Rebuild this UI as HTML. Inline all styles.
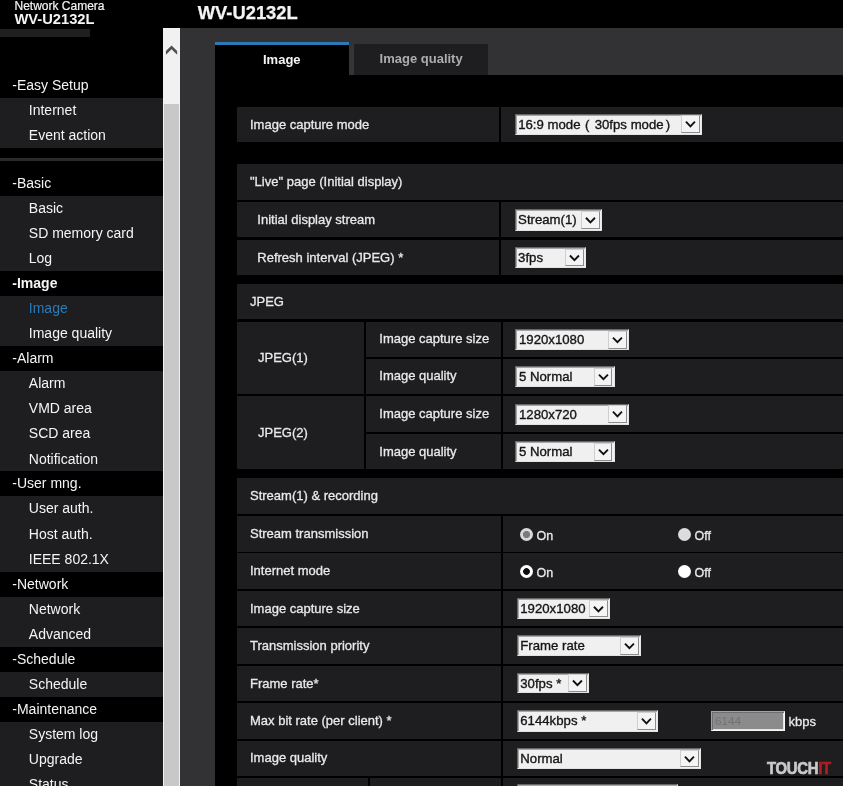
<!DOCTYPE html>
<html><head><meta charset="utf-8"><title>WV-U2132L</title>
<style>
html,body{margin:0;padding:0;background:#000;}
body{width:843px;height:786px;overflow:hidden;position:relative;font-family:"Liberation Sans",sans-serif;color:#f2f2f2;}
#wrap{position:absolute;left:0;top:0;width:843px;height:786px;overflow:hidden;will-change:transform;}
.b{position:absolute;}
.t{position:absolute;white-space:nowrap;color:#f4f4f4;font-size:14px;}
.sb{font-size:14px;}
.lb{font-size:13px;color:#e9e9e9;-webkit-text-stroke:0.3px #e9e9e9;margin-top:-0.2px;}
.sel{position:absolute;box-sizing:border-box;background:#f0f0f0;border:1.3px solid;border-color:#666 #e6e6e6 #e2e2e2 #666;box-shadow:inset 1px 1px 0 #a6a6a6;color:#151515;font-size:13.2px;white-space:nowrap;overflow:hidden;-webkit-text-stroke:0.35px #151515;}
.sel .st{position:absolute;left:2.6px;top:0;}
.sel .ar{position:absolute;right:1.1px;top:0.9px;box-sizing:border-box;background:#f4f4f4;border:1px solid;border-color:#cfcfcf #8c8c8c #8c8c8c #cfcfcf;display:block;line-height:0;}
.fw{display:inline-block;width:13.6px;}
.inp{position:absolute;box-sizing:border-box;background:#8b8b8b;border:1.1px solid;border-color:#a2a2a2 #f8f8f8 #f8f8f8 #a2a2a2;box-shadow:inset 1px 1px 0 #6e6e6e, inset -1px -1px 0 #e4e4e4;color:#727272;font-size:11.7px;padding-left:2.9px;}
.wm{font-weight:bold;font-size:16.5px;color:#c9c9c9;transform-origin:0 50%;transform:scaleX(0.90);letter-spacing:-0.3px;-webkit-text-stroke:0.7px;}
</style></head>
<body>
<div id="wrap">
<div class="b" style="left:0.0px;top:97.7px;width:163.0px;height:50.1px;background:#1e1e20;"></div>
<div class="b" style="left:0.0px;top:195.6px;width:163.0px;height:75.4px;background:#1e1e20;"></div>
<div class="b" style="left:0.0px;top:295.6px;width:163.0px;height:50.7px;background:#1e1e20;"></div>
<div class="b" style="left:0.0px;top:371.3px;width:163.0px;height:100.0px;background:#1e1e20;"></div>
<div class="b" style="left:0.0px;top:496.3px;width:163.0px;height:75.5px;background:#1e1e20;"></div>
<div class="b" style="left:0.0px;top:596.8px;width:163.0px;height:50.1px;background:#1e1e20;"></div>
<div class="b" style="left:0.0px;top:671.9px;width:163.0px;height:25.3px;background:#1e1e20;"></div>
<div class="b" style="left:0.0px;top:722.0px;width:163.0px;height:64.0px;background:#1e1e20;"></div>
<div class="b" style="left:0.0px;top:29.0px;width:90.0px;height:7.5px;background:#1f1f21;"></div>
<div class="b" style="left:0.0px;top:157.8px;width:163.0px;height:3.0px;background:#2a2a2c;"></div>
<div class="t sb" style="left:12.3px;top:73.2px;height:25.0px;line-height:25.0px;">-Easy Setup</div>
<div class="t sb" style="left:28.8px;top:97.7px;height:25.0px;line-height:25.0px;">Internet</div>
<div class="t sb" style="left:28.8px;top:122.8px;height:25.0px;line-height:25.0px;">Event action</div>
<div class="t sb" style="left:12.3px;top:170.5px;height:25.0px;line-height:25.0px;">-Basic</div>
<div class="t sb" style="left:28.8px;top:195.7px;height:25.0px;line-height:25.0px;">Basic</div>
<div class="t sb" style="left:28.8px;top:220.7px;height:25.0px;line-height:25.0px;">SD memory card</div>
<div class="t sb" style="left:28.8px;top:245.8px;height:25.0px;line-height:25.0px;">Log</div>
<div class="t sb" style="left:12.3px;top:270.8px;height:25.0px;line-height:25.0px;font-weight:bold;">-Image</div>
<div class="t sb" style="left:28.8px;top:295.9px;height:25.0px;line-height:25.0px;color:#2a7ab8;">Image</div>
<div class="t sb" style="left:28.8px;top:321.0px;height:25.0px;line-height:25.0px;">Image quality</div>
<div class="t sb" style="left:12.3px;top:346.2px;height:25.0px;line-height:25.0px;">-Alarm</div>
<div class="t sb" style="left:28.8px;top:371.2px;height:25.0px;line-height:25.0px;">Alarm</div>
<div class="t sb" style="left:28.8px;top:396.3px;height:25.0px;line-height:25.0px;">VMD area</div>
<div class="t sb" style="left:28.8px;top:421.4px;height:25.0px;line-height:25.0px;">SCD area</div>
<div class="t sb" style="left:28.8px;top:446.5px;height:25.0px;line-height:25.0px;">Notification</div>
<div class="t sb" style="left:12.3px;top:471.3px;height:25.0px;line-height:25.0px;">-User mng.</div>
<div class="t sb" style="left:28.8px;top:496.4px;height:25.0px;line-height:25.0px;">User auth.</div>
<div class="t sb" style="left:28.8px;top:521.5px;height:25.0px;line-height:25.0px;">Host auth.</div>
<div class="t sb" style="left:28.8px;top:546.6px;height:25.0px;line-height:25.0px;">IEEE 802.1X</div>
<div class="t sb" style="left:12.3px;top:571.8px;height:25.0px;line-height:25.0px;">-Network</div>
<div class="t sb" style="left:28.8px;top:596.8px;height:25.0px;line-height:25.0px;">Network</div>
<div class="t sb" style="left:28.8px;top:621.9px;height:25.0px;line-height:25.0px;">Advanced</div>
<div class="t sb" style="left:12.3px;top:646.9px;height:25.0px;line-height:25.0px;">-Schedule</div>
<div class="t sb" style="left:28.8px;top:672.0px;height:25.0px;line-height:25.0px;">Schedule</div>
<div class="t sb" style="left:12.3px;top:697.0px;height:25.0px;line-height:25.0px;">-Maintenance</div>
<div class="t sb" style="left:28.8px;top:722.1px;height:25.0px;line-height:25.0px;">System log</div>
<div class="t sb" style="left:28.8px;top:747.2px;height:25.0px;line-height:25.0px;">Upgrade</div>
<div class="t sb" style="left:28.8px;top:772.3px;height:25.0px;line-height:25.0px;">Status</div>
<div class="t " style="left:14.5px;top:-3.3px;height:18.0px;line-height:18.0px;font-size:12px;-webkit-text-stroke:0.2px #f4f4f4;">Network Camera</div>
<div class="t " style="left:14.5px;top:10.0px;height:18.0px;line-height:18.0px;font-size:14.7px;font-weight:bold;">WV-U2132L</div>
<div class="b" style="left:163.0px;top:28.3px;width:17.2px;height:760.0px;background:#f1f1f1;"></div>
<div class="b" style="left:164.3px;top:103.7px;width:14.5px;height:700.0px;background:#c8c8c8;"></div>
<svg class="b" style="left:165px;top:44px;width:13px;height:12px" viewBox="0 0 13 12"><polygon points="6.55,1.5 12.15,6.9 12.15,10.7 6.55,5.3 0.95,10.7 0.95,6.9" fill="#505050"/></svg>
<div class="b" style="left:180.2px;top:28.4px;width:663.0px;height:760.0px;background:#323234;"></div>
<div class="b" style="left:215.1px;top:75.0px;width:628.0px;height:711.0px;background:#000;"></div>
<div class="b" style="left:215.1px;top:43.5px;width:134.0px;height:32.0px;background:#000;"></div>
<div class="b" style="left:215.1px;top:41.5px;width:134.0px;height:3.2px;background:#2a7ab8;"></div>
<div class="b" style="left:349.0px;top:44.5px;width:5.0px;height:30.5px;background:#353537;"></div>
<div class="b" style="left:353.5px;top:43.8px;width:134.5px;height:31.2px;background:#1e1e20;"></div>
<div class="t " style="left:263.0px;top:43.4px;height:33.0px;line-height:33.0px;font-weight:bold;font-size:13px;">Image</div>
<div class="t " style="left:379.6px;top:42.4px;height:33.0px;line-height:33.0px;font-weight:bold;font-size:13px;color:#adadad;">Image quality</div>
<div class="t " style="left:197.8px;top:0.0px;height:26.0px;line-height:26.0px;font-weight:bold;font-size:18.35px;-webkit-text-stroke:0.25px #f4f4f4;">WV-U2132L</div>
<div class="b" style="left:237.0px;top:106.8px;width:262.2px;height:35.5px;background:#1e1e20;"></div>
<div class="b" style="left:501.4px;top:106.8px;width:341.6px;height:35.5px;background:#1e1e20;"></div>
<div class="t lb" style="left:250.0px;top:106.8px;height:35.5px;line-height:35.5px;">Image capture mode</div>
<div class="sel" style="left:514.6px;top:113.5px;width:187.4px;height:21.3px;line-height:19.7px"><span class="st">16:9 mode<span class="fw" style="padding-left:4.6px;width:9.6px">(</span>30fps mode<span class="fw" style="padding-left:2.2px;width:8px">)</span></span><span class="ar" style="width:18.7px;height:17.7px"><svg style="position:absolute;left:-1px;top:-1px" width="18.7" height="17.7" viewBox="0 0 18.7 17.7"><path d="M4.95 6.70 L9.45 11.30 L13.95 6.70" fill="none" stroke="#111" stroke-width="1.9"/></svg></span></div>
<div class="b" style="left:237.0px;top:164.3px;width:606.0px;height:35.4px;background:#1e1e20;"></div>
<div class="t lb" style="left:250.0px;top:164.3px;height:35.4px;line-height:35.4px;">&quot;Live&quot; page (Initial display)</div>
<div class="b" style="left:237.0px;top:201.9px;width:262.2px;height:35.5px;background:#1e1e20;"></div>
<div class="b" style="left:501.4px;top:201.9px;width:341.6px;height:35.5px;background:#1e1e20;"></div>
<div class="t lb" style="left:257.3px;top:201.9px;height:35.5px;line-height:35.5px;">Initial display stream</div>
<div class="sel" style="left:514.5px;top:209.4px;width:87.6px;height:21.4px;line-height:19.8px"><span class="st">Stream(1)</span><span class="ar" style="width:18.7px;height:17.8px"><svg style="position:absolute;left:-1px;top:-1px" width="18.7" height="17.8" viewBox="0 0 18.7 17.8"><path d="M4.95 6.75 L9.45 11.35 L13.95 6.75" fill="none" stroke="#111" stroke-width="1.9"/></svg></span></div>
<div class="b" style="left:237.0px;top:239.7px;width:262.2px;height:35.5px;background:#1e1e20;"></div>
<div class="b" style="left:501.4px;top:239.7px;width:341.6px;height:35.5px;background:#1e1e20;"></div>
<div class="t lb" style="left:257.3px;top:239.7px;height:35.5px;line-height:35.5px;">Refresh interval (JPEG) *</div>
<div class="sel" style="left:514.5px;top:247.2px;width:71.6px;height:20.9px;line-height:19.3px"><span class="st">3fps</span><span class="ar" style="width:18.7px;height:17.3px"><svg style="position:absolute;left:-1px;top:-1px" width="18.7" height="17.3" viewBox="0 0 18.7 17.3"><path d="M4.95 6.50 L9.45 11.10 L13.95 6.50" fill="none" stroke="#111" stroke-width="1.9"/></svg></span></div>
<div class="b" style="left:237.0px;top:284.0px;width:606.0px;height:35.4px;background:#1e1e20;"></div>
<div class="t lb" style="left:250.0px;top:284.0px;height:35.4px;line-height:35.4px;">JPEG</div>
<div class="b" style="left:237.0px;top:321.6px;width:127.2px;height:72.6px;background:#1e1e20;"></div>
<div class="b" style="left:237.0px;top:396.0px;width:127.2px;height:72.9px;background:#1e1e20;"></div>
<div class="t lb" style="left:258.0px;top:321.7px;height:72.3px;line-height:72.3px;">JPEG(1)</div>
<div class="t lb" style="left:258.0px;top:397.2px;height:72.3px;line-height:72.3px;">JPEG(2)</div>
<div class="b" style="left:366.3px;top:321.6px;width:134.3px;height:35.5px;background:#1e1e20;"></div>
<div class="b" style="left:503.0px;top:321.6px;width:340.0px;height:35.5px;background:#1e1e20;"></div>
<div class="t lb" style="left:379.3px;top:321.6px;height:35.5px;line-height:35.5px;">Image capture size</div>
<div class="b" style="left:366.3px;top:358.6px;width:134.3px;height:35.5px;background:#1e1e20;"></div>
<div class="b" style="left:503.0px;top:358.6px;width:340.0px;height:35.5px;background:#1e1e20;"></div>
<div class="t lb" style="left:379.3px;top:358.6px;height:35.5px;line-height:35.5px;">Image quality</div>
<div class="b" style="left:366.3px;top:396.0px;width:134.3px;height:35.5px;background:#1e1e20;"></div>
<div class="b" style="left:503.0px;top:396.0px;width:340.0px;height:35.5px;background:#1e1e20;"></div>
<div class="t lb" style="left:379.3px;top:396.0px;height:35.5px;line-height:35.5px;">Image capture size</div>
<div class="b" style="left:366.3px;top:433.9px;width:134.3px;height:35.5px;background:#1e1e20;"></div>
<div class="b" style="left:503.0px;top:433.9px;width:340.0px;height:35.5px;background:#1e1e20;"></div>
<div class="t lb" style="left:379.3px;top:433.9px;height:35.5px;line-height:35.5px;">Image quality</div>
<div class="sel" style="left:515.4px;top:329.3px;width:113.3px;height:21.2px;line-height:19.6px"><span class="st">1920x1080</span><span class="ar" style="width:18.7px;height:17.6px"><svg style="position:absolute;left:-1px;top:-1px" width="18.7" height="17.6" viewBox="0 0 18.7 17.6"><path d="M4.95 6.65 L9.45 11.25 L13.95 6.65" fill="none" stroke="#111" stroke-width="1.9"/></svg></span></div>
<div class="sel" style="left:515.4px;top:366.3px;width:99.2px;height:21.0px;line-height:19.4px"><span class="st">5 Normal</span><span class="ar" style="width:18.7px;height:17.4px"><svg style="position:absolute;left:-1px;top:-1px" width="18.7" height="17.4" viewBox="0 0 18.7 17.4"><path d="M4.95 6.55 L9.45 11.15 L13.95 6.55" fill="none" stroke="#111" stroke-width="1.9"/></svg></span></div>
<div class="sel" style="left:515.4px;top:403.5px;width:113.3px;height:21.3px;line-height:19.7px"><span class="st">1280x720</span><span class="ar" style="width:18.7px;height:17.7px"><svg style="position:absolute;left:-1px;top:-1px" width="18.7" height="17.7" viewBox="0 0 18.7 17.7"><path d="M4.95 6.70 L9.45 11.30 L13.95 6.70" fill="none" stroke="#111" stroke-width="1.9"/></svg></span></div>
<div class="sel" style="left:515.4px;top:441.4px;width:99.2px;height:21.0px;line-height:19.4px"><span class="st">5 Normal</span><span class="ar" style="width:18.7px;height:17.4px"><svg style="position:absolute;left:-1px;top:-1px" width="18.7" height="17.4" viewBox="0 0 18.7 17.4"><path d="M4.95 6.55 L9.45 11.15 L13.95 6.55" fill="none" stroke="#111" stroke-width="1.9"/></svg></span></div>
<div class="b" style="left:237.0px;top:478.4px;width:606.0px;height:35.4px;background:#1e1e20;"></div>
<div class="t lb" style="left:250.0px;top:478.4px;height:35.4px;line-height:35.4px;">Stream(1) &amp; recording</div>
<div class="b" style="left:237.0px;top:516.0px;width:263.6px;height:35.5px;background:#1e1e20;"></div>
<div class="b" style="left:503.0px;top:516.0px;width:340.0px;height:35.5px;background:#1e1e20;"></div>
<div class="t lb" style="left:250.0px;top:516.0px;height:35.5px;line-height:35.5px;">Stream transmission</div>
<div class="b" style="left:237.0px;top:553.4px;width:263.6px;height:35.5px;background:#1e1e20;"></div>
<div class="b" style="left:503.0px;top:553.4px;width:340.0px;height:35.5px;background:#1e1e20;"></div>
<div class="t lb" style="left:250.0px;top:553.4px;height:35.5px;line-height:35.5px;">Internet mode</div>
<div class="b" style="left:237.0px;top:590.8px;width:263.6px;height:35.5px;background:#1e1e20;"></div>
<div class="b" style="left:503.0px;top:590.8px;width:340.0px;height:35.5px;background:#1e1e20;"></div>
<div class="t lb" style="left:250.0px;top:590.8px;height:35.5px;line-height:35.5px;">Image capture size</div>
<div class="b" style="left:237.0px;top:628.3px;width:263.6px;height:35.5px;background:#1e1e20;"></div>
<div class="b" style="left:503.0px;top:628.3px;width:340.0px;height:35.5px;background:#1e1e20;"></div>
<div class="t lb" style="left:250.0px;top:628.3px;height:35.5px;line-height:35.5px;">Transmission priority</div>
<div class="b" style="left:237.0px;top:665.7px;width:263.6px;height:35.5px;background:#1e1e20;"></div>
<div class="b" style="left:503.0px;top:665.7px;width:340.0px;height:35.5px;background:#1e1e20;"></div>
<div class="t lb" style="left:250.0px;top:665.7px;height:35.5px;line-height:35.5px;">Frame rate*</div>
<div class="b" style="left:237.0px;top:703.1px;width:263.6px;height:35.5px;background:#1e1e20;"></div>
<div class="b" style="left:503.0px;top:703.1px;width:340.0px;height:35.5px;background:#1e1e20;"></div>
<div class="t lb" style="left:250.0px;top:703.1px;height:35.5px;line-height:35.5px;">Max bit rate (per client) *</div>
<div class="b" style="left:237.0px;top:740.5px;width:263.6px;height:35.5px;background:#1e1e20;"></div>
<div class="b" style="left:503.0px;top:740.5px;width:340.0px;height:35.5px;background:#1e1e20;"></div>
<div class="t lb" style="left:250.0px;top:740.5px;height:35.5px;line-height:35.5px;">Image quality</div>
<div class="b" style="left:237.0px;top:777.6px;width:131.0px;height:20.0px;background:#1e1e20;"></div>
<div class="b" style="left:370.2px;top:777.6px;width:130.4px;height:20.0px;background:#1e1e20;"></div>
<div class="b" style="left:503.0px;top:777.6px;width:340.0px;height:20.0px;background:#1e1e20;"></div>
<div class="sel" style="left:516.7px;top:784.2px;width:161.8px;height:21.0px;line-height:19.4px"><span class="st"></span><span class="ar" style="width:18.7px;height:17.4px"><svg style="position:absolute;left:-1px;top:-1px" width="18.7" height="17.4" viewBox="0 0 18.7 17.4"><path d="M4.95 6.55 L9.45 11.15 L13.95 6.55" fill="none" stroke="#111" stroke-width="1.9"/></svg></span></div>
<div class="b" style="left:520.0px;top:528.0px;width:13.0px;height:13.0px;border-radius:50%;background:radial-gradient(circle closest-side,#7a7a7a 0,#7a7a7a 50%,#d8d8d8 60%,#d8d8d8 100%)"></div>
<div class="b" style="left:678.0px;top:528.0px;width:13.0px;height:13.0px;border-radius:50%;background:#dcdcdc"></div>
<div class="b" style="left:520.0px;top:565.0px;width:13.0px;height:13.0px;border-radius:50%;background:radial-gradient(circle closest-side,#0c0c0c 0,#0c0c0c 46%,#fff 57%,#fff 100%)"></div>
<div class="b" style="left:678.0px;top:565.0px;width:13.0px;height:13.0px;border-radius:50%;background:#fff"></div>
<div class="t lb" style="left:536.6px;top:519.3px;height:35.5px;line-height:35.5px;font-size:12.5px;">On</div>
<div class="t lb" style="left:694.6px;top:519.3px;height:35.5px;line-height:35.5px;font-size:12.5px;">Off</div>
<div class="t lb" style="left:536.6px;top:556.0px;height:35.5px;line-height:35.5px;font-size:12.5px;">On</div>
<div class="t lb" style="left:694.6px;top:556.0px;height:35.5px;line-height:35.5px;font-size:12.5px;">Off</div>
<div class="sel" style="left:516.7px;top:597.8px;width:93.1px;height:21.4px;line-height:19.8px"><span class="st">1920x1080</span><span class="ar" style="width:18.7px;height:17.8px"><svg style="position:absolute;left:-1px;top:-1px" width="18.7" height="17.8" viewBox="0 0 18.7 17.8"><path d="M4.95 6.75 L9.45 11.35 L13.95 6.75" fill="none" stroke="#111" stroke-width="1.9"/></svg></span></div>
<div class="sel" style="left:516.7px;top:635.4px;width:124.0px;height:21.0px;line-height:19.4px"><span class="st">Frame rate</span><span class="ar" style="width:18.7px;height:17.4px"><svg style="position:absolute;left:-1px;top:-1px" width="18.7" height="17.4" viewBox="0 0 18.7 17.4"><path d="M4.95 6.55 L9.45 11.15 L13.95 6.55" fill="none" stroke="#111" stroke-width="1.9"/></svg></span></div>
<div class="sel" style="left:516.7px;top:672.6px;width:72.4px;height:20.9px;line-height:19.3px"><span class="st">30fps *</span><span class="ar" style="width:18.7px;height:17.3px"><svg style="position:absolute;left:-1px;top:-1px" width="18.7" height="17.3" viewBox="0 0 18.7 17.3"><path d="M4.95 6.50 L9.45 11.10 L13.95 6.50" fill="none" stroke="#111" stroke-width="1.9"/></svg></span></div>
<div class="sel" style="left:516.7px;top:710.4px;width:141.0px;height:21.3px;line-height:19.7px"><span class="st">6144kbps *</span><span class="ar" style="width:18.7px;height:17.7px"><svg style="position:absolute;left:-1px;top:-1px" width="18.7" height="17.7" viewBox="0 0 18.7 17.7"><path d="M4.95 6.70 L9.45 11.30 L13.95 6.70" fill="none" stroke="#111" stroke-width="1.9"/></svg></span></div>
<div class="sel" style="left:516.7px;top:747.9px;width:184.0px;height:21.3px;line-height:19.7px"><span class="st">Normal</span><span class="ar" style="width:18.7px;height:17.7px"><svg style="position:absolute;left:-1px;top:-1px" width="18.7" height="17.7" viewBox="0 0 18.7 17.7"><path d="M4.95 6.70 L9.45 11.30 L13.95 6.70" fill="none" stroke="#111" stroke-width="1.9"/></svg></span></div>
<div class="inp" style="left:711.0px;top:711.4px;width:74.1px;height:19.6px;line-height:17.8px">6144</div>
<div class="t lb" style="left:788.6px;top:704.1px;height:35.5px;line-height:35.5px;font-size:13px;">kbps</div>
<div class="t wm" style="left:766.6px;top:758px;height:20px;line-height:20px">TOUCH<span style="color:#b01e23">IT</span></div>
</div>
</body></html>
